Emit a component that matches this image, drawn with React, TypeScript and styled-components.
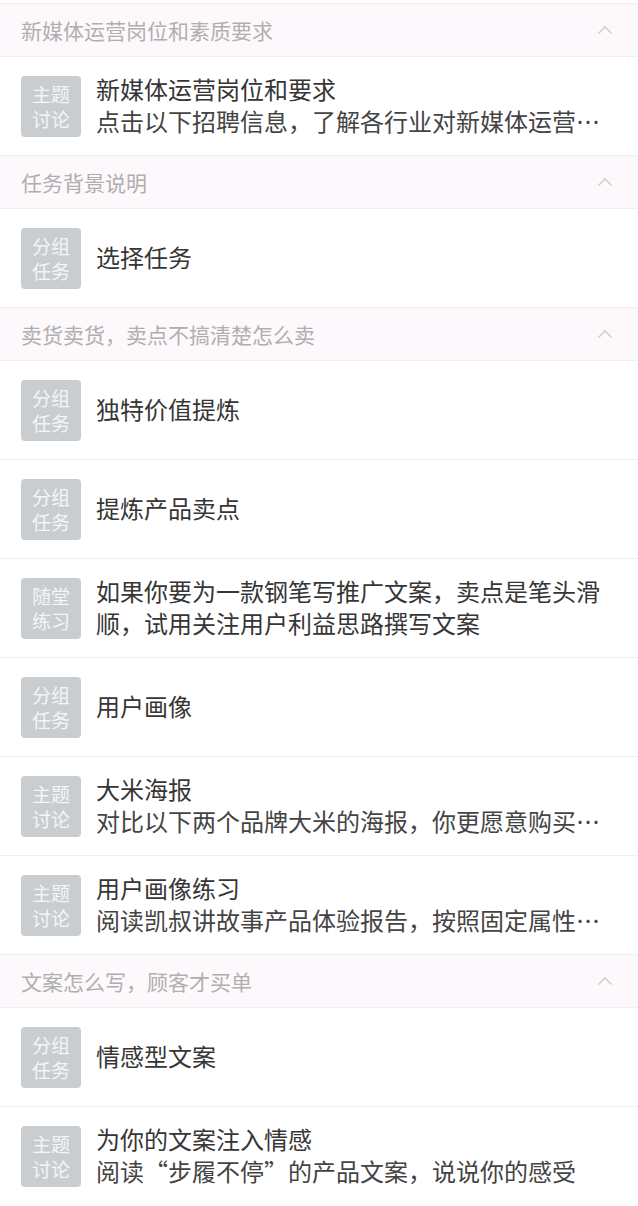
import React from "react";
import styled, { createGlobalStyle } from "styled-components";

type Kind = "topic" | "group" | "practice";

interface Item {
  kind: Kind;
  title: string;
  desc?: string;
}

interface Section {
  title: string;
  items: Item[];
}

const BADGE_TEXT: Record<Kind, [string, string]> = {
  topic: ["主题", "讨论"],
  group: ["分组", "任务"],
  practice: ["随堂", "练习"],
};

const SECTIONS: Section[] = [
  {
    title: "新媒体运营岗位和素质要求",
    items: [
      {
        kind: "topic",
        title: "新媒体运营岗位和要求",
        desc: "点击以下招聘信息，了解各行业对新媒体运营岗位的具体要求",
      },
    ],
  },
  {
    title: "任务背景说明",
    items: [{ kind: "group", title: "选择任务" }],
  },
  {
    title: "卖货卖货，卖点不搞清楚怎么卖",
    items: [
      { kind: "group", title: "独特价值提炼" },
      { kind: "group", title: "提炼产品卖点" },
      {
        kind: "practice",
        title: "如果你要为一款钢笔写推广文案，卖点是笔头滑顺，试用关注用户利益思路撰写文案",
      },
      { kind: "group", title: "用户画像" },
      {
        kind: "topic",
        title: "大米海报",
        desc: "对比以下两个品牌大米的海报，你更愿意购买哪一款？为什么？",
      },
      {
        kind: "topic",
        title: "用户画像练习",
        desc: "阅读凯叔讲故事产品体验报告，按照固定属性和动态属性进行分析",
      },
    ],
  },
  {
    title: "文案怎么写，顾客才买单",
    items: [
      { kind: "group", title: "情感型文案" },
      {
        kind: "topic",
        title: "为你的文案注入情感",
        desc: "阅读“步履不停”的产品文案，说说你的感受",
      },
    ],
  },
];

export default function App() {
  return (
    <>
      <GlobalStyle />
      <Page>
        {SECTIONS.map((section) => (
          <div key={section.title}>
            <SectionHeader>
              <HeaderTitle>{section.title}</HeaderTitle>
              {/* collapse chevron */}
              <svg width="16" height="10" viewBox="0 0 16 10">
                <path
                  d="M1.5 8.5 L8 2 L14.5 8.5"
                  fill="none"
                  stroke="#cfcfcf"
                  strokeWidth="1.6"
                />
              </svg>
            </SectionHeader>
            {section.items.map((item) => (
              <Row key={item.title}>
                <Badge>
                  <span>{BADGE_TEXT[item.kind][0]}</span>
                  <span>{BADGE_TEXT[item.kind][1]}</span>
                </Badge>
                <Body>
                  <Title>{item.title}</Title>
                  {item.desc && <Desc>{item.desc}</Desc>}
                </Body>
              </Row>
            ))}
          </div>
        ))}
      </Page>
    </>
  );
}

const GlobalStyle = createGlobalStyle`
  body {
    margin: 0;
    background: #fff;
    font-family: "Noto Sans CJK SC", "Noto Sans", sans-serif;
  }
`;

const Page = styled.div`
  width: 638px;
  padding-top: 3px;
  overflow: hidden;
`;

const SectionHeader = styled.div`
  display: flex;
  align-items: center;
  justify-content: space-between;
  height: 52px;
  padding: 0 25px 0 21px;
  background: #fdf8fb;
  border-top: 1px solid #f0eef0;
  border-bottom: 1px solid #f0eef0;

  svg {
    display: block;
  }
`;

const HeaderTitle = styled.span`
  font-size: 21px;
  color: #afafaf;
  line-height: 1;
`;

const Row = styled.div`
  display: flex;
  align-items: center;
  gap: 15px;
  height: 98px;
  padding: 0 24px 0 21px;
  border-bottom: 1px solid #efefef;

  &:last-child {
    border-bottom: 0;
  }
`;

const Badge = styled.div`
  flex: none;
  display: flex;
  flex-direction: column;
  align-items: center;
  justify-content: center;
  width: 60px;
  height: 61px;
  border-radius: 4px;
  background: #c9cdd0;
  color: #f4f5f6;
  font-size: 19px;
  line-height: 25px;
`;

const Body = styled.div`
  flex: 1;
  min-width: 0;
  display: flex;
  flex-direction: column;
  padding-bottom: 3px;
`;

const Title = styled.div`
  font-size: 24px;
  line-height: 32px;
  color: #363636;
`;

const Desc = styled.div`
  font-size: 24px;
  line-height: 32px;
  color: #444;
  white-space: nowrap;
  overflow: hidden;
  text-overflow: ellipsis;
`;
